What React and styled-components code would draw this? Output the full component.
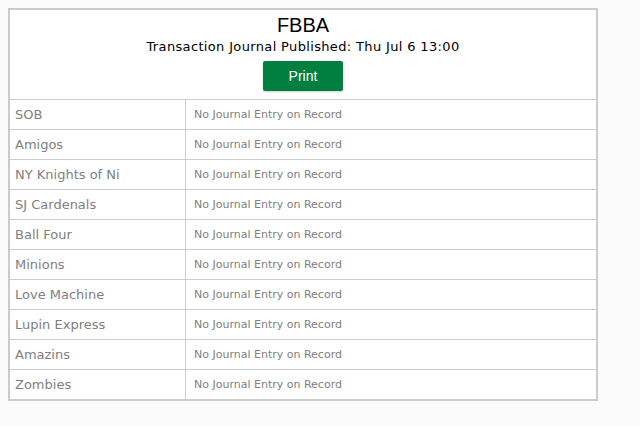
import styled, { createGlobalStyle } from 'styled-components';

const teams = [
  'SOB',
  'Amigos',
  'NY Knights of Ni',
  'SJ Cardenals',
  'Ball Four',
  'Minions',
  'Love Machine',
  'Lupin Express',
  'Amazins',
  'Zombies',
];

const GlobalStyle = createGlobalStyle`
  body {
    margin: 8px;
    background: #fbfbfb;
    font-family: Verdana, "DejaVu Sans", sans-serif;
  }
`;

const App = () => {
  return (
    <>
      <GlobalStyle />
      <Journal>
        <Header>
          <Title>FBBA</Title>
          <Subtitle>Transaction Journal Published: Thu Jul 6 13:00</Subtitle>
          <PrintBtn>Print</PrintBtn>
        </Header>
        {teams.map((team) => (
          <Row key={team}>
            <TeamCell>{team}</TeamCell>
            <EntryCell>No Journal Entry on Record</EntryCell>
          </Row>
        ))}
      </Journal>
    </>
  );
};

export default App;

const Journal = styled.div`
  width: 586px;
  border: 2px solid #cccccc;
  background: #ffffff;
`;

const Header = styled.div`
  display: flex;
  flex-direction: column;
  align-items: center;
  padding: 4px 0 8px;
  border-bottom: 1px solid #cccccc;
`;

const Title = styled.div`
  font-family: Arial, "Liberation Sans", sans-serif;
  font-size: 20px;
  line-height: 22px;
  color: #000;
`;

const Subtitle = styled.div`
  font-size: 13px;
  letter-spacing: 0.35px;
  line-height: 18px;
  margin-top: 2px;
  color: #000;
`;

const PrintBtn = styled.button`
  width: 80px;
  height: 30px;
  margin-top: 5px;
  border: none;
  border-radius: 2px;
  background: #007f3f;
  color: #ffffff;
  font-family: Arial, "Liberation Sans", sans-serif;
  font-size: 14px;
  box-shadow: 0 1px 2px rgba(0, 0, 0, 0.2);
`;

const Row = styled.div`
  display: flex;
  height: 29px;
  border-bottom: 1px solid #cccccc;

  &:last-child {
    border-bottom: none;
  }
`;

const TeamCell = styled.div`
  width: 170px;
  padding-left: 5px;
  display: flex;
  align-items: center;
  border-right: 1px solid #cccccc;
  font-size: 13px;
  color: #808080;
`;

const EntryCell = styled.div`
  flex: 1;
  padding-left: 8px;
  display: flex;
  align-items: center;
  font-size: 11px;
  color: #808080;
`;
